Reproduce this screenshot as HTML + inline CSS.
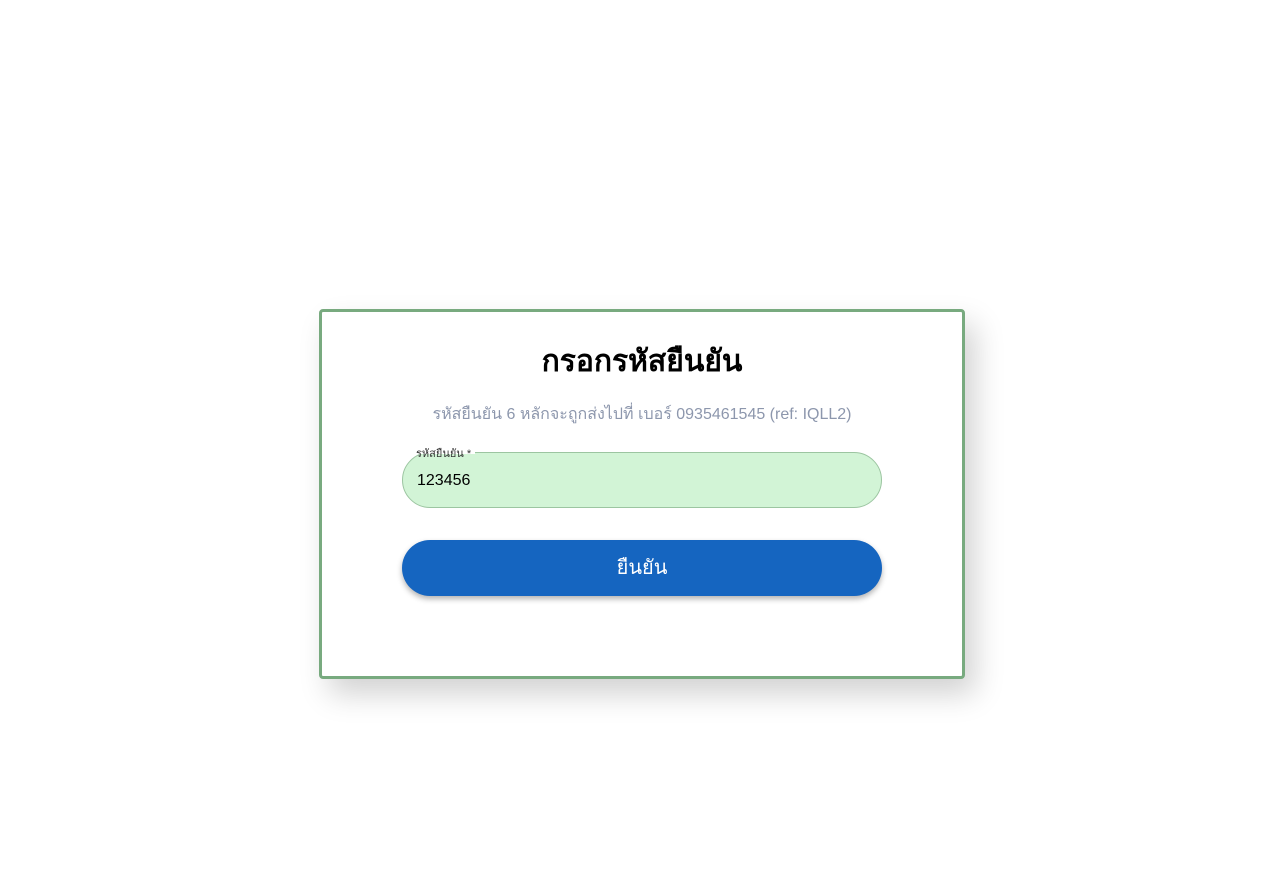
<!DOCTYPE html>
<html><head><meta charset="utf-8"><style>
html,body{margin:0;padding:0;background:#fff;width:1284px;height:893px;overflow:hidden;font-family:"Liberation Sans",sans-serif;}
.card{position:absolute;left:319px;top:309px;width:640px;height:364px;border:3px solid #78aa7f;border-radius:4px;background:#fff;box-shadow:10px 15px 30px rgba(0,0,0,0.18);}
.title{position:absolute;left:0;right:0;top:26px;text-align:center;font-size:30px;font-weight:bold;color:#000;}
.sub{position:absolute;left:0;right:0;top:90px;text-align:center;font-size:16px;color:#8d97ad;}
.input{position:absolute;left:80px;top:140px;width:478px;height:54px;border:1px solid #9cc5a1;border-radius:28px;background:#d2f4d6;}
.input span{position:absolute;left:14px;top:19px;font-size:16px;color:#000;}
.label{position:absolute;left:90px;top:132px;font-size:11px;color:#333;background:linear-gradient(#fff 55%,transparent 55%);padding:0 4px;}
.btn{position:absolute;left:80px;top:228px;width:480px;height:56px;border-radius:28px;background:#1565c0;color:#fff;font-size:20px;text-align:center;line-height:56px;box-shadow:0 3px 6px rgba(0,0,0,0.3);}
</style></head><body>
<div class="card">
<div class="title">กรอกรหัสยืนยัน</div>
<div class="sub">รหัสยืนยัน 6 หลักจะถูกส่งไปที่ เบอร์ 0935461545 (ref: IQLL2)</div>
<div class="input"><span>123456</span></div>
<div class="label">รหัสยืนยัน *</div>
<div class="btn">ยืนยัน</div>
</div>
</body></html>
